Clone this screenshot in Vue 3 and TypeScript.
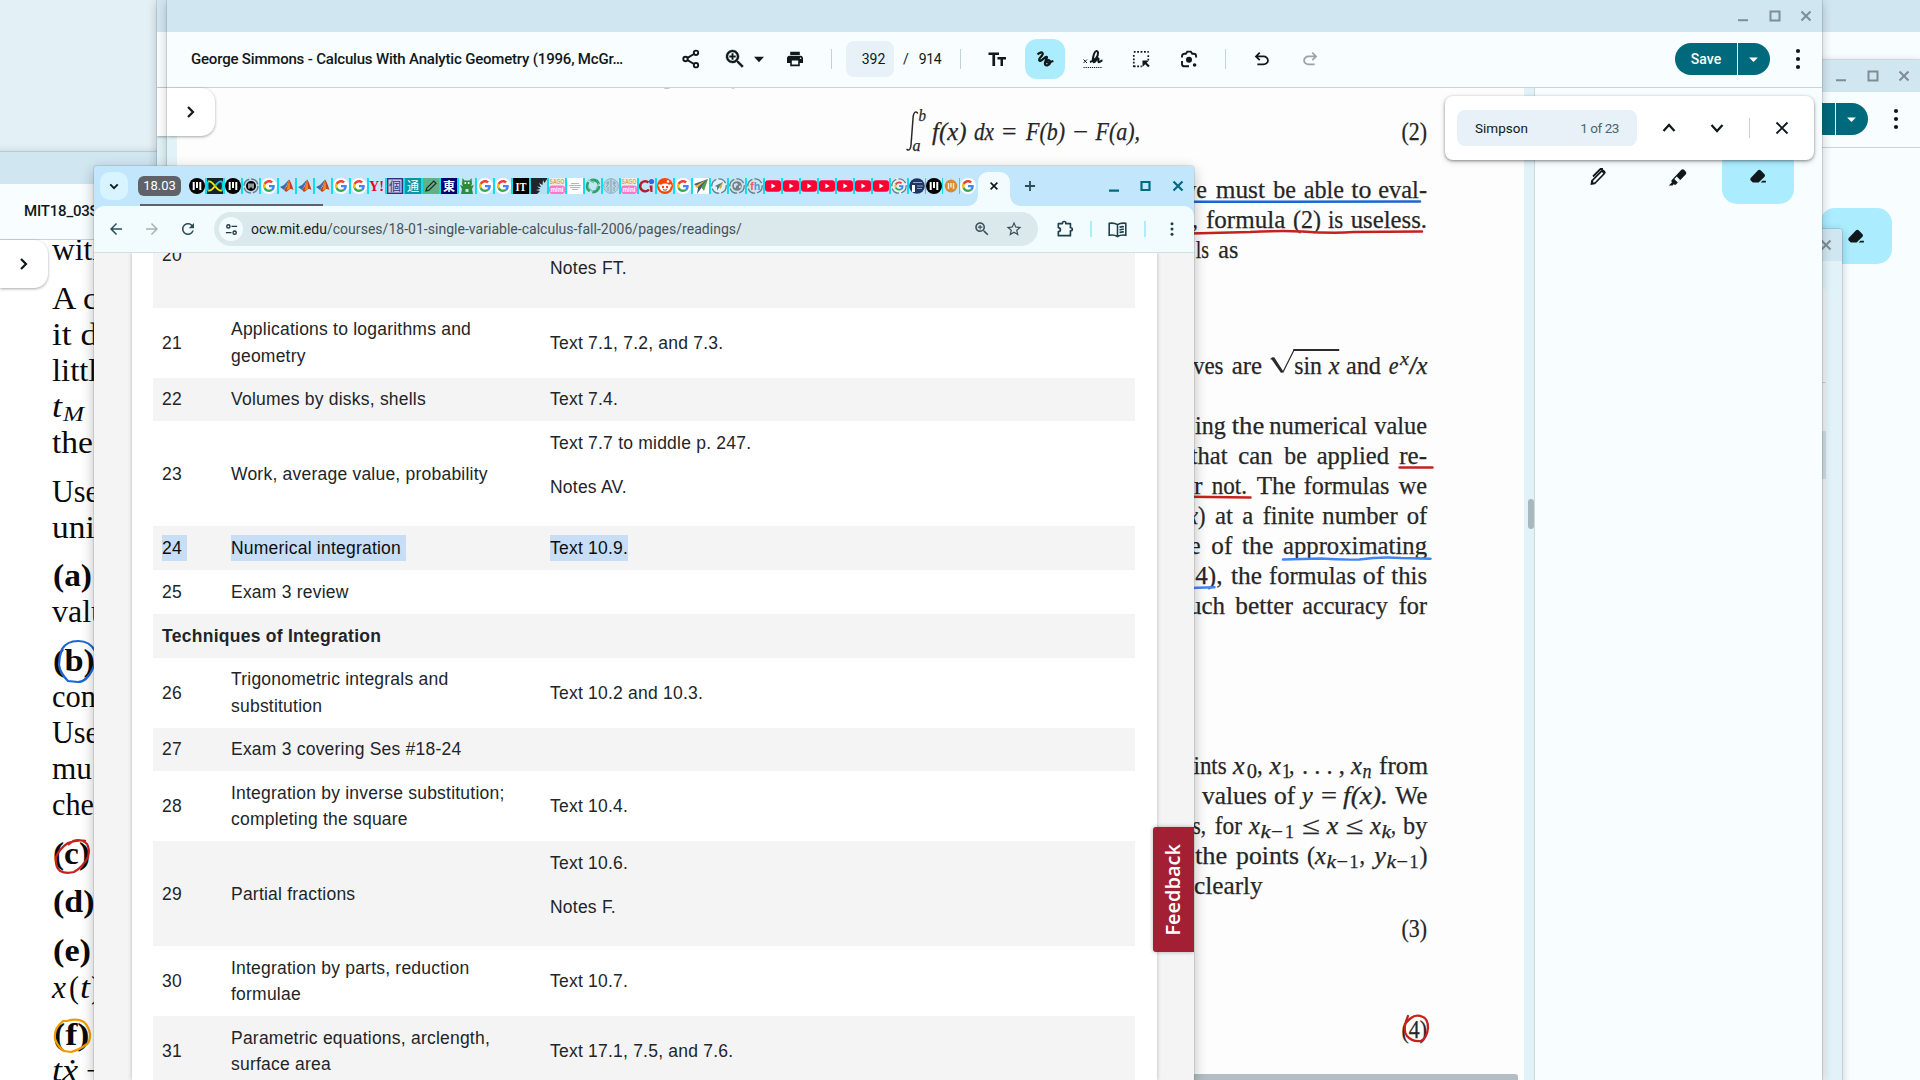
<script setup lang="ts">
interface Glyph {
  t: string
  x: number
  w?: number
  y: number
  s?: number
  i?: boolean
  b?: boolean
}

const icons = {
  zoomIn:
    'M15.5 14h-.79l-.28-.27C15.41 12.59 16 11.11 16 9.5 16 5.91 13.09 3 9.5 3S3 5.91 3 9.5 5.91 16 9.5 16c1.61 0 3.09-.59 4.23-1.57l.27.28v.79l5 4.99L20.49 19l-4.99-5zm-6 0C7.01 14 5 11.99 5 9.5S7.01 5 9.5 5 14 7.01 14 9.5 11.99 14 9.5 14zM12.5 10.25h-2.25v2.25h-1.5v-2.25H6.5v-1.5h2.25V6.5h1.5v2.25h2.25z',
  print:
    'M19 8H5c-1.66 0-3 1.34-3 3v6h4v4h12v-4h4v-6c0-1.66-1.34-3-3-3zm-3 11H8v-5h8v5zm3-7c-.55 0-1-.45-1-1s.45-1 1-1 1 .45 1 1-.45 1-1 1zm-1-9H6v4h12V3z',
  undo: 'M7 19v-2h7.1q1.575 0 2.738-1T18 13.5T16.838 11T14.1 10H7.8l2.6 2.6L9 14L4 9l5-5l1.4 1.4L7.8 8h6.3q2.425 0 4.163 1.575T20 13.5t-1.737 3.925T14.1 19z',
  star: 'M22 9.24l-7.19-.62L12 2 9.19 8.63 2 9.24l5.46 4.73L5.82 21 12 17.27 18.18 21l-1.63-7.03L22 9.24zM12 15.4l-3.76 2.27 1-4.28-3.32-2.88 4.38-.38L12 6.1l1.71 4.04 4.38.38-3.32 2.88 1 4.28L12 15.4z',
  back: 'M20 11H7.83l5.59-5.59L12 4l-8 8 8 8 1.41-1.41L7.83 13H20v-2z',
  reload:
    'M17.65 6.35C16.2 4.9 14.21 4 12 4c-4.42 0-7.99 3.58-7.99 8s3.57 8 7.99 8c3.73 0 6.84-2.55 7.73-6h-2.08c-.82 2.33-3.04 4-5.65 4-3.31 0-6-2.69-6-6s2.69-6 6-6c1.66 0 3.14.69 4.22 1.78L13 11h7V4l-2.35 2.35z',
  eraser: 'M5.2 19.2 2.6 16.6q-.9-.9-.9-2t.9-2L11.8 3q.9-.9 2-.9t2 .9l4.6 4.6q.9.9.9 2t-.9 2l-7.600 7.600zM15.500 19.200l2.500-2.500h4.500v2.500z',
}

const favicons: string[] = [
  'm', 'inf', 'm', 'mring', 'g', 'ml', 'ml', 'ml', 'g', 'g', 'y', 'ko', 'tsu', 'pen', 'higashi', 'frog',
  'g', 'g', 'it', 'burst', 'sago', 'lines', 'swirl', 'brain', 'sago', 'q', 'reddit', 'g', 'plane', 'planer',
  'globe', 'fh', 'yt', 'yt', 'yt', 'yt', 'yt', 'yt', 'yt', 'gring', 'navy', 'm', 'mo', 'g',
]

interface Row {
  n: string
  topic: string[]
  read: string[]
  selected?: boolean
  heading?: boolean
}
const rows: Row[] = [
  { n: '20', topic: [''], read: ['Text 6.4.', 'Notes FT.'] },
  { n: '21', topic: ['Applications to logarithms and', 'geometry'], read: ['Text 7.1, 7.2, and 7.3.'] },
  { n: '22', topic: ['Volumes by disks, shells'], read: ['Text 7.4.'] },
  { n: '23', topic: ['Work, average value, probability'], read: ['Text 7.7 to middle p. 247.', 'Notes AV.'] },
  { n: '24', topic: ['Numerical integration'], read: ['Text 10.9.'], selected: true },
  { n: '25', topic: ['Exam 3 review'], read: [] },
  { n: 'Techniques of Integration', topic: [], read: [], heading: true },
  { n: '26', topic: ['Trigonometric integrals and', 'substitution'], read: ['Text 10.2 and 10.3.'] },
  { n: '27', topic: ['Exam 3 covering Ses #18-24'], read: [] },
  { n: '28', topic: ['Integration by inverse substitution;', 'completing the square'], read: ['Text 10.4.'] },
  { n: '29', topic: ['Partial fractions'], read: ['Text 10.6.', 'Notes F.'] },
  { n: '30', topic: ['Integration by parts, reduction', 'formulae'], read: ['Text 10.7.'] },
  { n: '31', topic: ['Parametric equations, arclength,', 'surface area'], read: ['Text 17.1, 7.5, and 7.6.'] },
]

// Each word of the scanned textbook page keeps its typeset start and width.
function line(y: number, words: [string, number, number][]): Glyph[] {
  return words.map(([t, x, e]) => ({ t, x, w: e - x, y }))
}
const g = (t: string, x: number, e: number, y: number, i = true, s = 25): Glyph => ({ t, x, w: e - x, y, i, s })

const book: Glyph[] = [
  g('p', 664, 675, 83, false, 22), g('g', 728, 739, 83, false, 22),
  g('b', 918.500, 926, 121, true, 17), g('a', 912.500, 920.500, 151, true, 17),
  g('f(x)', 932, 966.500, 139.500), g('dx', 974, 994, 139.500), g('=', 1002, 1016.500, 139.500, false),
  g('F(b)', 1026, 1065, 139.500), g('−', 1073, 1088, 139.500, false), g('F(a),', 1095.500, 1140, 139.500),
  ...line(139.5, [['(2)', 1401.5, 1427]]),
  ...line(197.5, [['we', 1179, 1207], ['must', 1215.7, 1265], ['be', 1273.3, 1296], ['able', 1303.7, 1344], ['to', 1351.3, 1371.5], ['eval-', 1378.3, 1427]]),
  ...line(228, [[',', 1192, 1198], ['formula', 1206, 1285.3], ['(2)', 1293, 1321], ['is', 1328, 1343.3], ['useless.', 1350.7, 1427]]),
  ...line(258, [['ls', 1195.7, 1209], ['as', 1218.3, 1238.3]]),
  ...line(373.5, [['ves', 1193, 1223.5], ['are', 1231.7, 1262], ['sin', 1294.3, 1322], ['and', 1346, 1381]]),
  g('x', 1328.700, 1339.500, 373.500), g('e', 1388.700, 1398.500, 373.500), g('x', 1400, 1409, 364.500, true, 19),
  g('/', 1408.500, 1418, 373.500, false), g('x', 1416.500, 1427.500, 373.500),
  ...line(433.5, [['ing', 1195, 1225.7], ['the', 1231.7, 1264.3], ['numerical', 1269.3, 1367.3], ['value', 1374.3, 1427]]),
  ...line(463.7, [['that', 1190.7, 1227.5], ['can', 1238.3, 1272.7], ['be', 1284.3, 1306.7], ['applied', 1316.7, 1389], ['re-', 1399.3, 1427]]),
  ...line(493.8, [['r', 1194, 1202.5], ['not.', 1211.7, 1247], ['The', 1256.7, 1295.7], ['formulas', 1303.7, 1389.3], ['we', 1398.7, 1427]]),
  g('x', 1188, 1198, 524), ...line(524, [[')', 1198, 1205.5], ['at', 1215, 1233], ['a', 1242.3, 1253.3], ['finite', 1262.7, 1314], ['number', 1322.3, 1397.7], ['of', 1406.7, 1427.3]]),
  ...line(554, [['e', 1190.5, 1200.5], ['of', 1211.3, 1232.3], ['the', 1242, 1273.3], ['approximating', 1283, 1427]]),
  ...line(584, [['4),', 1195.3, 1222.5], ['the', 1231, 1262], ['formulas', 1269, 1356], ['of', 1362.7, 1384.3], ['this', 1391.3, 1427]]),
  ...line(614, [['uch', 1189, 1225], ['better', 1235.3, 1293], ['accuracy', 1302.3, 1387.7], ['for', 1398.7, 1427]]),
  ...line(774, [['ints', 1193.5, 1226.7], [',', 1257, 1262.7], [',', 1289, 1294.5], ['. . . ,', 1302, 1345], ['from', 1379, 1428]]),
  g('x', 1233, 1244.700, 774), g('0', 1246.700, 1257, 777.500, false, 20), g('x', 1269.500, 1281, 774), g('1', 1282, 1291, 777.500, false, 20),
  g('x', 1351, 1362, 774), g('n', 1362.500, 1371.500, 777.500, true, 20),
  ...line(804.3, [['values', 1202, 1267], ['of', 1274, 1295.3], ['=', 1321, 1337], ['We', 1395.3, 1427.3]]),
  g('y', 1301.700, 1312.700, 804.300), g('f(x).', 1343, 1388, 804.300),
  ...line(834.3, [['s,', 1192.5, 1206], ['for', 1214.7, 1242], ['≤', 1302, 1320], ['≤', 1345.5, 1363.5], [',', 1391, 1396], ['by', 1403, 1427.3]]),
  g('x', 1249, 1260, 834.300), g('k', 1260.500, 1270.500, 838, true, 19), g('−', 1271, 1283, 838, false, 19), g('1', 1285, 1294, 838, false, 19),
  g('x', 1326.700, 1338.300, 834.300), g('x', 1370, 1381, 834.300), g('k', 1381.500, 1391, 838, true, 19),
  ...line(864.3, [['the', 1195, 1227.3], ['points', 1236, 1299], ['(', 1307, 1315], [',', 1359.5, 1365], [')', 1419.5, 1427.5]]),
  g('x', 1315, 1326, 864.300), g('k', 1326.500, 1336, 868, true, 19), g('−', 1336.500, 1348, 868, false, 19), g('1', 1349.500, 1358.500, 868, false, 19),
  g('y', 1374.300, 1386, 864.300), g('k', 1386.500, 1396, 868, true, 19), g('−', 1396.500, 1408, 868, false, 19), g('1', 1409.500, 1418.500, 868, false, 19),
  ...line(894.3, [['clearly', 1194, 1262.7]]),
  ...line(937.3, [['(3)', 1401.5, 1427]]),
  ...line(1037.5, [['(4)', 1401.5, 1427]]),
]

const notes: Glyph[] = [
  { t: 'with', x: 52, y: 259.5, w: 56 }, { t: 'A c', x: 52, y: 308.5, w: 46 }, { t: 'it d', x: 52, y: 344.5, w: 46 },
  { t: 'little', x: 52, y: 380.5, w: 60 }, { t: 't', x: 52, y: 417, i: true, w: 10 }, { t: 'M', x: 63, y: 421, s: 21, i: true, w: 21 },
  { t: 'the', x: 52, y: 452.5, w: 41 }, { t: 'Use', x: 52, y: 501.5, w: 47 }, { t: 'unit', x: 52, y: 537.5, w: 52 },
  { t: '(a)', x: 53, y: 585.5, w: 39, b: true }, { t: 'valu', x: 52, y: 622, w: 55 },
  { t: '(b)', x: 53, y: 670.5, w: 42, b: true }, { t: 'con', x: 52, y: 707, w: 44 }, { t: 'Use', x: 52, y: 743, w: 47 },
  { t: 'mu', x: 52, y: 779, w: 40 }, { t: 'che', x: 52, y: 815, w: 42 },
  { t: '(c)', x: 53, y: 863.5, w: 37, b: true }, { t: '(d)', x: 53, y: 912, w: 41.5, b: true },
  { t: '(e)', x: 53, y: 961, w: 38, b: true }, { t: 'x', x: 52, y: 997.5, w: 14, i: true }, { t: '(', x: 69, y: 997.5, w: 10 },
  { t: 't', x: 80, y: 997.5, w: 10, i: true }, { t: ')', x: 91, y: 997.5, w: 10 },
  { t: '(f)', x: 53, y: 1045, w: 36.500, b: true }, { t: 'tẋ', x: 52, y: 1081, w: 26, i: true }, { t: '−', x: 86, y: 1081 },
]
</script>

<template>
  <div class="desktop">
    <!-- rearmost window, seen along the right edge -->
    <section class="win rear"><div class="bar"></div></section>

    <!-- second PDF viewer on the right -->
    <section class="win right-pdf">
      <div class="bar">
        <svg class="wb" viewBox="0 0 88 24"><path d="M4 16.200h10" /><path d="M36.500 7.500h9v9h-9z" /><path d="M67.500 7.500l9 9m0-9l-9 9" /></svg>
      </div>
      <div class="tools">
        <div class="save"><span>Save</span><i><svg viewBox="0 0 24 24"><path d="M6.500 9.500l5.500 5.500 5.500-5.500z" fill="#fff" /></svg></i></div>
        <svg class="ic dots" viewBox="0 0 24 24"><circle cx="12" cy="4" r="2.100" /><circle cx="12" cy="12" r="2.100" /><circle cx="12" cy="20" r="2.100" /></svg>
      </div>
      <div class="side-tools">
        <div class="tile on"><svg class="ic" viewBox="0 0 24 24"><g transform="translate(3 4.200) scale(.75)"><path :d="icons.eraser" /></g></svg></div>
      </div>
    </section>

    <!-- sliver window -->
    <section class="win sliver">
      <div class="bar"><svg viewBox="0 0 24 24"><path d="M7.500 7.500l9 9m0-9l-9 9" /></svg></div>
      <div class="sliver-body"><div class="sliver-pane"><b></b></div></div>
    </section>

    <!-- left notes window -->
    <section class="win notes">
      <div class="bar"></div>
      <div class="tools"><span class="title">MIT18_03S</span></div>
      <div class="doc">
        <svg class="page" width="300" height="840" viewBox="0 240 300 840">
          <text
            v-for="(t, k) in notes" :key="k" :x="t.x" :y="t.y" :font-size="t.s ?? 31" :textLength="t.w"
            lengthAdjust="spacingAndGlyphs" :font-style="t.i ? 'italic' : 'normal'" :font-weight="t.b ? 700 : 400"
          >{{ t.t }}</text>
          <g fill="none" stroke-width="2.200" stroke-linejoin="round">
            <path stroke="#1967d2" d="M62 649q5-8 16-8 12 0 17 10 2 9-2 17-6 14-15 14l-10-1q-8-8-9-16 0-8 3-16z" />
            <path stroke="#c5221f" d="M86 841q-8-2-18 2-9 6-12 14-1 10 4 14 6 3 14 1 9-5 14-15 2-8-1-13-6-6-14-3l-5 4" />
            <path stroke="#f29900" d="M67 1021q10-3 17 1 5 5 6 12 0 8-3 10-8 6-16 8l-7-1q-6-4-9-12-1-8 4-14l4-4z" />
          </g>
        </svg>
        <div class="expander"><svg class="ic" viewBox="0 0 24 24"><path d="M9 7l5 5-5 5" fill="none" stroke="#10181b" stroke-width="2.200" /></svg></div>
      </div>
    </section>

    <!-- PDF window directly behind the front one -->
    <section class="win behind-pdf">
      <div class="bar"></div>
      <div class="tools"></div>
      <div class="doc tinted"><div class="expander"></div></div>
    </section>

    <!-- main PDF viewer -->
    <section class="win pdf">
      <div class="bar">
        <svg class="wb" viewBox="0 0 88 24"><path d="M4 16.200h10" /><path d="M36.500 7.500h9v9h-9z" /><path d="M67.500 7.500l9 9m0-9l-9 9" /></svg>
      </div>
      <div class="tools">
        <span class="title main">George Simmons - Calculus With Analytic Geometry (1996, McGr…</span>
        <svg class="ic share" viewBox="0 0 24 24"><g fill="none" stroke="#10181b" stroke-width="1.900"><circle cx="6.500" cy="12" r="2.200" /><circle cx="17" cy="5.800" r="2.200" /><circle cx="17" cy="18.200" r="2.200" /><path d="M8.500 10.900l6.500-3.900M8.500 13.100l6.500 3.900" /></g></svg>
        <svg class="ic zoom" viewBox="0 0 24 24"><path :d="icons.zoomIn" stroke="#10181b" stroke-width=".4" /></svg>
        <svg class="ic caret" viewBox="0 0 24 24"><path d="M7 9.800l5 5.400 5-5.400z" /></svg>
        <svg class="ic printer" viewBox="0 0 24 24"><g transform="translate(2.400 2.400) scale(.8)"><path :d="icons.print" /></g></svg>
        <i class="vr a"></i>
        <span class="pageno">392</span><span class="slash">/</span><span class="total">914</span>
        <i class="vr b"></i>
        <svg class="ic tt" viewBox="0 0 24 24"><path d="M3.500 5.500h10.500v2.600h-3.900v10.900H7.400V8.100H3.500zM12.500 10h8.500v2.400h-3v6.600h-2.500v-6.600h-3z" /></svg>
        <div class="ink"><svg class="ic" viewBox="0 0 24 24"><path d="M4.500 7.500c2-1.800 4.600-2.800 5.200-1.200.8 2.300-4.600 5-3.400 7.200 1.100 1.900 5.300-3.200 7-3.600 2.200-.3-1.800 4.300-1.400 7 .4 2.400 4.600 2 5.200-1.100.5-2.300-1.500-3.300-3-2.400-1.200.8-.6 2.400 1.200 2.200 1.800-.1 3.200-.7 5-1.700" fill="none" stroke="#10181b" stroke-width="2.200" stroke-linejoin="round" /></svg></div>
        <svg class="ic sig" viewBox="0 0 24 24"><g fill="none" stroke="#10181b"><path stroke-width="2" d="M9 15c5-1.500 8.500-5.500 8-9.500-.5-2.500-3-1.500-4 1.500-1.200 3.500-1.400 7.500-.3 8.200 1.500.8 2.600-3.700 4.300-4 1.500 0-.6 3.800.8 4 1.300.1 1.800-1.600 3.700-1.700" /><path stroke-width="1" d="M2.500 12.500l3.500 3.500m0-3.500l-3.500 3.500" /><path stroke-width="1.200" stroke-dasharray="1.200 .9" d="M2.500 20.500h19" /></g></svg>
        <svg class="ic sel" viewBox="0 0 24 24"><g fill="none" stroke="#10181b" stroke-width="1.700"><path stroke-dasharray="1.800 1.600" d="M4.800 4.900h15M4.800 8v12M4.800 19.400h8M19.300 8.300v5" /></g><path d="M13.500 13.500h6.500l-2.300 2.300 3 3-1.500 1.500-3-3-2.700 2.700z" /></svg>
        <svg class="ic lens" viewBox="0 0 24 24"><g fill="none" stroke="#10181b" stroke-width="1.900"><path d="M5 10.500V9.200a2.400 2.400 0 0 1 2.400-2.400h1.400l1.500-2.200h3.500l1.500 2.200h1.400a2.400 2.400 0 0 1 2.400 2.400v1.300M5 14v2.900a2.400 2.400 0 0 0 2.400 2.400H12" /></g><circle cx="12" cy="12.800" r="3" /><circle cx="17.600" cy="18" r="1.800" /></svg>
        <i class="vr c"></i>
        <svg class="ic undo" viewBox="0 0 24 24"><g transform="translate(1.200 1.500) scale(.88)"><path :d="icons.undo" /></g></svg>
        <svg class="ic redo" viewBox="0 0 24 24"><g transform="translate(22.800 1.500) scale(-.88 .88)"><path :d="icons.undo" fill="#9aa3a6" /></g></svg>
        <div class="save"><span>Save</span><i><svg viewBox="0 0 24 24"><path d="M6.500 9.500l5.500 5.500 5.500-5.500z" fill="#fff" /></svg></i></div>
        <svg class="ic dots" viewBox="0 0 24 24"><circle cx="12" cy="4" r="2.100" /><circle cx="12" cy="12" r="2.100" /><circle cx="12" cy="20" r="2.100" /></svg>
      </div>
      <div class="pdf-body">
        <i class="gutter"></i>
        <div class="sheet">
          <svg class="scan" width="1347" height="992" viewBox="177 88 1347 992">
            <text
              v-for="(t, k) in book" :key="k" :x="t.x" :y="t.y" :font-size="t.s ?? 25" :textLength="t.w"
              lengthAdjust="spacingAndGlyphs" :font-style="t.i ? 'italic' : 'normal'"
            >{{ t.t }}</text>
            <g fill="none" stroke="#2a2a2a" stroke-linecap="round">
              <path stroke-width="1.500" d="M917.500 113q-3-3-4.300 3l-2.200 29q-.6 6.500-4 4.500" />
              <path stroke-width="1.200" d="M1271 359l3-1 9 14 11-22" /><path stroke-width="2.400" d="M1272.500 358.500l9 13" /><path stroke-width="1.900" d="M1294 350h44.500" />
            </g>
            <g fill="none" stroke-width="2.500" stroke-linecap="round">
              <path stroke="#1967d2" d="M1190 201.800h90l140-.4" />
              <path stroke="#c5221f" d="M1190 233.500l60-1.500q30-1.500 52-.5 30 2 52 .6l68-.6M1399.500 467.400h33M1190 496.700l60.500.9" />
              <path stroke="#4285f4" d="M1283 559.500l38-1q20 1.500 38 1 22-3 42-1.500l29.500.8M1190 588l24.500-.7" />
              <path stroke="#c5221f" stroke-width="2.300" d="M1408 1016q-6 14-1 20 5 6 14 5 6-3 7-13 0-9-5-11-7-3-12 1-4 3-6 6" />
            </g>
          </svg>
          <div class="hscroll"></div>
          <div class="expander"><svg class="ic" viewBox="0 0 24 24"><path d="M9 7l5 5-5 5" fill="none" stroke="#10181b" stroke-width="2.200" /></svg></div>
        </div>
        <div class="vtrack"><i></i></div>
        <aside class="side">
          <div class="side-tools">
            <div class="tile"><svg class="ic" viewBox="0 0 24 24"><g transform="translate(0 1)"><path d="M4.500 20l.6-4.600L15.200 5.300q1.500-1.500 3 0l.8.8q1.500 1.500 0 3L9 19.200zM7 17.500l1.800-.3 8.500-8.700-1.400-1.400-8.500 8.500z" fill-rule="evenodd" /><path d="M7 11.500l7.500-7.500h2.500" fill="none" stroke="#10181b" stroke-width="1.800" /></g></svg></div>
            <div class="tile"><svg class="ic" viewBox="0 0 24 24"><g transform="translate(-1.200 .4) scale(1.060)"><path d="M3.800 19.800l3-3-.5-.6q-.5-.7.100-1.300l9-9.600q1.500-1.500 3 0l1.300 1.300q1.500 1.500 0 3L10.500 19q-.6.600-1.300.1l-.6-.5-1.200 1.200zM9 13.800l3.200 3.200 2.300-2.400-3.200-3.200z" fill-rule="evenodd" /></g></svg></div>
            <div class="tile on"><svg class="ic" viewBox="0 0 24 24"><g transform="translate(3 4.200) scale(.75)"><path :d="icons.eraser" /></g></svg></div>
          </div>
        </aside>
      </div>
      <div class="find">
        <div class="find-in"><span>Simpson</span><em>1 of 23</em></div>
        <svg class="ic up" viewBox="0 0 24 24"><path d="M6.500 15l5.500-6 5.500 6" /></svg>
        <svg class="ic down" viewBox="0 0 24 24"><path d="M6.500 9l5.500 6 5.500-6" /></svg>
        <i class="vr"></i>
        <svg class="ic close" viewBox="0 0 24 24"><path d="M6.500 6.500l11 11m0-11l-11 11" /></svg>
      </div>
    </section>

    <!-- browser window -->
    <section class="win chrome">
      <div class="tabs">
        <div class="tabsearch"><svg viewBox="0 0 24 24"><path d="M7.500 10l4.500 4.500 4.500-4.500" fill="none" stroke="#10181b" stroke-width="2.200" /></svg></div>
        <div class="group">18.03</div>
        <div class="favs">
          <span v-for="(f, k) in favicons" :key="k" class="fav" :class="{ tight: k > 39 }">
            <svg viewBox="0 0 16 16">
              <g v-if="f === 'm'"><circle cx="8" cy="8" r="8" /><path d="M4.700 4v8M8 4v6M11.300 4v8" stroke="#fff" stroke-width="2" /></g>
              <g v-else-if="f === 'inf'"><rect width="16" height="16" fill="#10242a" /><path d="M1 3.500q3-1 7 4.500t7 4.500M1 12.500q3 1 7-4.500" fill="none" stroke="#f3e600" stroke-width="1.900" /><path d="M8 8q4-5.500 7-4.500M1 3.500q-1 4 0 9M15 3.500q1.500 4 0 9" fill="none" stroke="#19c8d8" stroke-width="1.900" /></g>
              <g v-else-if="f === 'mring'"><circle cx="8" cy="8" r="7" fill="#c6dbe3" stroke="#5f7f8d" stroke-width="1.400" stroke-dasharray="9 2" /><circle cx="8" cy="8" r="5" /><path d="M6 5.500v5M8 5.500v4M10 5.500v5" stroke="#fff" stroke-width="1.200" /></g>
              <g v-else-if="f === 'g' || f === 'gring'">
                <circle cx="8" cy="8" r="8" fill="#fff" /><circle v-if="f === 'gring'" cx="8" cy="8" r="7.200" fill="#e5f0f4" stroke="#5f7f8d" stroke-width="1.300" stroke-dasharray="9 2" />
                <g :transform="f === 'g' ? 'translate(2 2) scale(.25)' : 'translate(3.500 3.500) scale(.19)'">
                  <path fill="#EA4335" d="M24 9.500c3.540 0 6.710 1.220 9.210 3.600l6.850-6.850C35.900 2.380 30.470 0 24 0 14.620 0 6.510 5.380 2.560 13.220l7.980 6.190C12.430 13.720 17.740 9.500 24 9.500z" />
                  <path fill="#4285F4" d="M46.980 24.550c0-1.570-.15-3.090-.38-4.550H24v9.020h12.940c-.58 2.960-2.260 5.480-4.780 7.180l7.730 6c4.510-4.180 7.090-10.360 7.090-17.650z" />
                  <path fill="#FBBC05" d="M10.530 28.590c-.48-1.450-.76-2.990-.76-4.590s.27-3.140.76-4.590l-7.980-6.190C.92 16.460 0 20.120 0 24c0 3.880.92 7.540 2.560 10.780l7.970-6.190z" />
                  <path fill="#34A853" d="M24 48c6.480 0 11.930-2.130 15.890-5.810l-7.730-6c-2.150 1.450-4.920 2.300-8.160 2.300-6.260 0-11.570-4.220-13.470-9.910l-7.980 6.190C6.510 42.620 14.620 48 24 48z" />
                </g>
              </g>
              <g v-else-if="f === 'ml'"><path d="M1 9l4-2 5-5.500Q8 8 5 12z" fill="#3a6ea5" /><path d="M5 12l3-4 2-6.500q1.500 1 4.500 10.500-2-1.500-3.500-1-2 2-4 3z" fill="#c4401f" /><path d="M7.500 12.500q1.500-6 2.500-10 1 3 1 8.500z" fill="#f08a24" /></g>
              <g v-else-if="f === 'y'"><text x="0" y="13" font-size="14" font-weight="700" fill="#e8002d" font-family="Liberation Serif" textLength="15" lengthAdjust="spacingAndGlyphs">Y!</text></g>
              <g v-else-if="f === 'ko'"><rect x=".7" y=".7" width="14.600" height="14.600" fill="#c9c6e6" stroke="#35307c" stroke-width="1.400" /><text class="cjk" x="2" y="12.500" font-size="12" fill="#35307c">個</text></g>
              <g v-else-if="f === 'tsu'"><rect width="16" height="16" fill="#0a97a2" /><text class="cjk" x="2" y="12.500" font-size="12" fill="#fff">通</text></g>
              <g v-else-if="f === 'pen'"><rect width="16" height="16" fill="#5fb383" /><path d="M3 13l.8-3 7-7 2.200 2.200-7 7z" fill="none" stroke="#1d2b24" stroke-width="1.200" /></g>
              <g v-else-if="f === 'higashi'"><rect width="16" height="16" fill="#000070" /><text class="cjk" x="2" y="12.700" font-size="12" font-weight="700" fill="#fff">東</text></g>
              <g v-else-if="f === 'frog'"><path d="M3.500 0l2 2.500h5l2-2.500.5 6-1 2 3-1-2 4 1 5H2l1-5-2-4 3 1-1-2z" fill="#2f8a3a" /><circle cx="6.300" cy="5" r="1" fill="#fff" /><circle cx="9.700" cy="5" r="1" fill="#fff" /><path d="M6.500 11h3v3h-3z" fill="#bfe3ee" /></g>
              <g v-else-if="f === 'it'"><rect width="16" height="16" /><text x="2.500" y="12.500" font-size="13" font-weight="700" fill="#fff" font-family="Liberation Serif" textLength="11" lengthAdjust="spacingAndGlyphs">IT</text></g>
              <g v-else-if="f === 'burst'"><rect width="16" height="16" fill="#20262a" /><path d="M16 1l-2.500 4L12 2l-.5 5L8 5l2 4-4-.5 3.500 2.500L5 12l4 1-3 3h10z" fill="#b5dff2" /></g>
              <g v-else-if="f === 'sago'"><rect width="16" height="16" fill="#e6f2ee" /><rect y="7.500" width="16" height="8.500" rx="3" fill="#ff77c8" /><text x=".5" y="6" font-size="7" font-weight="700" fill="#e0a24e" font-family="Liberation Sans" textLength="15" lengthAdjust="spacingAndGlyphs">SAGO</text><text x="1.500" y="14.200" font-size="7" font-weight="700" fill="#fff" font-family="Liberation Sans" textLength="13" lengthAdjust="spacingAndGlyphs">mini</text></g>
              <g v-else-if="f === 'lines'"><rect width="16" height="16" fill="#fff" /><path d="M4 5.500h8M2 7.500h12M3 9.500h10M5 11.500h6" stroke="#b5b5b5" stroke-width="1" /></g>
              <g v-else-if="f === 'swirl'"><circle cx="8" cy="8" r="6" fill="none" stroke="#2fa36b" stroke-width="2.800" stroke-dasharray="10 2.500" /><path d="M3 2l6 3M14 5l-3 6M8 14l-5-5" stroke="#7cc9a2" stroke-width="1.200" /></g>
              <g v-else-if="f === 'brain'"><circle cx="8" cy="8" r="7.400" fill="#b9d3df" stroke="#86aabb" stroke-width=".8" /><path d="M8 1v14M5 3v4l-2 2M5 9v4M11 3v4l2 2M11 9v4M3 5h3M10 5h3" fill="none" stroke="#7c9fb2" stroke-width=".9" /></g>
              <g v-else-if="f === 'q'"><path d="M9.500 4.500a5 5 0 1 0 .5 7" fill="none" stroke="#b3202c" stroke-width="2.600" /><circle cx="12.500" cy="3.500" r="2.600" fill="#2d6be0" /><path d="M10.500 7.500h3v6.500h-2z" fill="#b3202c" /></g>
              <g v-else-if="f === 'reddit'"><circle cx="8" cy="8" r="8" fill="#ff4500" /><ellipse cx="8" cy="9.500" rx="5.500" ry="4" fill="#fff" /><circle cx="11" cy="3.500" r="1.300" fill="#fff" /><circle cx="2.700" cy="7.500" r="1.300" fill="#fff" /><circle cx="13.300" cy="7.500" r="1.300" fill="#fff" /><circle cx="6" cy="9" r="1.200" fill="#ff4500" /><circle cx="10" cy="9" r="1.200" fill="#ff4500" /><path d="M5.800 11.500q2.200 1.500 4.400 0" fill="none" stroke="#333" stroke-width=".8" /></g>
              <g v-else-if="f === 'plane'"><rect width="16" height="16" fill="#fff" /><path d="M1 6L15 1 4 16l1-6z" fill="#3f5f7d" /><path d="M2 8l11-6-9 8z" fill="#e9b52f" /><path d="M8 9l7-8-4 12z" fill="#5b9b4f" /></g>
              <g v-else-if="f === 'planer'"><circle cx="8" cy="8" r="7.200" fill="#e5f0f4" stroke="#5f7f8d" stroke-width="1.300" stroke-dasharray="9 2" /><path d="M4 8l8-4-6 8.500V9z" fill="#4d7f86" /><path d="M8 9l4-5-2 7z" fill="#e0a52f" /></g>
              <g v-else-if="f === 'globe'"><circle cx="8" cy="8" r="7.200" fill="#d4e2e8" stroke="#5f7f8d" stroke-width="1.300" stroke-dasharray="9 2" /><circle cx="8" cy="8" r="4.800" fill="#74828b" /><path d="M5 6l3-1 1 2-2 1v2L5 9zM10 8l2-.5-.5 2.500H10z" fill="#d4e2e8" /></g>
              <g v-else-if="f === 'fh'"><circle cx="8" cy="8" r="7.200" fill="#d4e2e8" stroke="#5f7f8d" stroke-width="1.300" stroke-dasharray="9 2" /><text x="3.300" y="12" font-size="10.500" font-weight="700" font-family="Liberation Sans"><tspan fill="#ef5b4c">f</tspan><tspan fill="#37a3e0">h</tspan></text></g>
              <g v-else-if="f === 'yt'"><rect y="2.300" width="16" height="11.400" rx="3" fill="#ff0033" /><path d="M6.400 5.600v4.800L10.600 8z" fill="#fff" /></g>
              <g v-else-if="f === 'navy'"><circle cx="8" cy="8" r="7.800" fill="#1d3765" /><path d="M3 7h3v7H3z" fill="#fff" /><path d="M4 4.500h9M8 8h6M8 10.500h5" stroke="#8ea3c4" stroke-width="1.200" /></g>
              <g v-else-if="f === 'mo'"><ellipse cx="8" cy="8" rx="6.300" ry="6.500" fill="#d98a35" /><path d="M5.500 5v6M8 5v4.500M10.500 5v6" stroke="#f8e6cf" stroke-width="1.500" /></g>
            </svg>
          </span>
        </div>
        <div class="active-tab"><svg viewBox="0 0 24 24"><path d="M7.500 7.500l9 9m0-9l-9 9" /></svg></div>
        <svg class="plus" viewBox="0 0 24 24"><path d="M12 6.500v11M6.500 12h11" /></svg>
        <svg class="wb" viewBox="0 0 88 24"><path d="M7 16.700h10" /><path d="M39.500 8h8v8h-8z" /><path d="M71.500 7.500l9 9m0-9l-9 9" /></svg>
      </div>
      <div class="nav">
        <svg class="nb" viewBox="0 0 24 24"><path :d="icons.back" /></svg>
        <svg class="nb dim" viewBox="0 0 24 24"><g transform="translate(24) scale(-1 1)"><path :d="icons.back" /></g></svg>
        <svg class="nb" viewBox="0 0 24 24"><path :d="icons.reload" /></svg>
        <div class="omni">
          <span class="tune"><svg viewBox="0 0 24 24"><g fill="none" stroke="#1f3840" stroke-width="2.200"><circle cx="7" cy="7" r="2.600" /><path d="M12 7h9M3 17h9" /><circle cx="17" cy="17" r="2.600" /></g></svg></span>
          <span class="url"><b>ocw.mit.edu</b>/courses/18-01-single-variable-calculus-fall-2006/pages/readings/</span>
          <svg class="oi" viewBox="0 0 24 24"><path :d="icons.zoomIn" /></svg>
          <svg class="oi star" viewBox="0 0 24 24"><path :d="icons.star" /></svg>
        </div>
        <svg class="ext" viewBox="0 0 24 24"><path d="M4 5.500h5q-.3-2.500 2-2.500T13 5.500h5.500v5q2.300-.2 2.300 1.800t-2.300 2V20H4v-4.800q2.500-.2 2.500-2.400T4 10.300z" fill="none" stroke="#1f3f4a" stroke-width="2" stroke-linejoin="round" /></svg>
        <i class="nv one"></i>
        <svg class="reader" viewBox="0 0 24 24"><path d="M12 6.500Q8 4 2.500 5v13.500Q8 17.500 12 20q4-2.500 9.500-1.500V5Q16 4 12 6.500V20M14.300 9.500q2.500-1 5-.7M14.300 12.500q2.500-1 5-.7M14.300 15.500q2.500-1 5-.7" fill="none" stroke="#1f3f4a" stroke-width="1.800" /></svg>
        <i class="nv two"></i>
        <svg class="kebab" viewBox="0 0 24 24"><circle cx="12" cy="5" r="2" /><circle cx="12" cy="12" r="2" /><circle cx="12" cy="19" r="2" /></svg>
      </div>
      <div class="web">
        <div class="card">
          <div class="table">
            <div v-for="r in rows" :key="r.n" class="tr" :class="{ picked: r.selected, heading: r.heading }">
              <div class="td"><span>{{ r.n }}</span></div>
              <div v-if="!r.heading" class="td"><span v-for="t in r.topic" :key="t">{{ t }}</span></div>
              <div v-if="!r.heading" class="td" :class="{ multi: r.read.length > 1 }"><span v-for="t in r.read" :key="t">{{ t }}</span></div>
            </div>
          </div>
        </div>
        <div class="feedback"><span>Feedback</span></div>
      </div>
    </section>
  </div>
</template>

<style>
html,
body {
  margin: 0;
  overflow: hidden;
}
</style>

<style scoped>
.desktop {
  position: relative;
  width: 1920px;
  height: 1080px;
  overflow: hidden;
  background: #e3f0f5;
  font-family: Roboto, 'Liberation Sans', sans-serif;
  color: #10181b;
}
.win {
  position: absolute;
  background: #f8fdff;
  overflow: hidden;
  box-shadow: 0 0 0 1px rgba(60, 80, 90, 0.15), 0 2px 10px rgba(0, 0, 0, 0.22);
}
.bar {
  height: 32px;
  display: flex;
  justify-content: flex-end;
  background: #d0e6f1;
}
.bar svg {
  fill: none;
  stroke: #7f8d94;
  stroke-width: 2;
}
.wb {
  width: 88px;
  height: 24px;
  margin: 4px 0 0 0;
}
.rear { left: 1600px; top: 0; width: 330px; height: 1080px; }
.right-pdf { left: 1300px; top: 60px; width: 620px; height: 1030px; border-radius: 3px 0 0; }
.sliver { left: 1700px; top: 229px; width: 142px; height: 860px; border-radius: 3px; background: #e1f3f8; }
.sliver .bar svg { width: 24px; height: 24px; margin: 4px 4px 0 0; }
.sliver-pane {
  width: 126px;
  height: 808px;
  margin-top: 21px;
  border-radius: 0 14px 0 0;
  background: linear-gradient(#f1f3f7 100px, #ccd3d6 100px, #ccd3d6 101px, #f1f3f7 101px);
}
.sliver-pane b { display: block; width: 126px; height: 48px; background: #cfdde4; position: relative; top: 149px; }
.notes { left: -300px; top: 152px; width: 760px; height: 940px; }
.notes .tools { padding-left: 324px; }
.behind-pdf { left: 157px; top: 0; width: 1600px; height: 1090px; }
.pdf { left: 167px; top: 0; width: 1655px; height: 1080px; display: flex; flex-direction: column; }
.tools {
  box-sizing: border-box;
  height: 56px;
  display: flex;
  align-items: center;
  padding: 0 12px 1px 0;
  border-bottom: 1px solid #c3d6db;
  background: #f8fdff;
}
.ic { width: 24px; height: 24px; flex: none; display: block; fill: #10181b; }
.title { font-size: 15px; font-weight: 500; white-space: nowrap; letter-spacing: -0.190px; }
.title.main { margin-left: 24px; width: 434px; flex: none; }
.share { margin-left: 54px; }
.zoom { margin-left: 20px; }
.caret { margin-left: 0; }
.printer { margin-left: 12px; }
.vr { width: 1px; height: 20px; background: #c5d3d8; flex: none; }
.vr.a { margin: 0 14px 0 24px; }
.pageno {
  box-sizing: border-box;
  width: 48px;
  height: 36px;
  line-height: 36px;
  padding-left: 7px;
  text-align: center;
  border-radius: 8px;
  background: #e8f1f8;
  font-size: 14px;
  flex: none;
}
.slash { width: 24px; text-align: center; font-size: 14px; flex: none; }
.total { width: 24px; text-align: center; font-size: 14px; letter-spacing: -0.300px; flex: none; }
.vr.b { margin: 0 24px 0 18px; }
.ink {
  width: 40px;
  height: 40px;
  margin-left: 16px;
  display: flex;
  align-items: center;
  justify-content: center;
  background: #abecff;
  border-radius: 12px;
  flex: none;
}
.sig { margin-left: 16px; }
.sel { margin-left: 24px; }
.lens { margin-left: 24px; }
.vr.c { margin: 0 24px; }
.redo { margin-left: 24px; }
.save {
  display: flex;
  margin-left: auto;
  width: 95px;
  height: 32px;
  flex: none;
  border-radius: 16px;
  overflow: hidden;
  background: #006a7c;
  color: #fff;
  font-size: 14px;
  font-weight: 500;
  line-height: 32px;
}
.save span { width: 62px; text-align: center; }
.save i { display: flex; align-items: center; width: 32px; border-left: 1px solid #e8f8fb; }
.save i svg { width: 19px; height: 19px; margin-left: 6px; }
.dots { margin-left: 16px; }
.doc { position: relative; height: 850px; background: #fff; }
.doc.tinted { height: 992px; background: #e1f3f8; }
.notes .page { display: block; margin-left: 300px; }
.page text { font-family: 'Liberation Serif', serif; fill: #0a0a0a; }
.expander {
  position: absolute;
  left: 0;
  top: 0;
  width: 48px;
  height: 48px;
  display: flex;
  align-items: center;
  justify-content: center;
  background: #fff;
  border-radius: 0 14px 14px 0;
  box-shadow: 0 1px 3px rgba(0, 0, 0, 0.35);
}
.notes .expander { left: 300px; }
.pdf-body { flex: 1; display: flex; min-height: 0; }
.gutter { width: 10px; background: #e1f3f8; flex: none; }
.sheet { position: relative; width: 1347px; background: #fdfdfd; flex: none; }
.sheet .expander { left: -10px; }
.scan { display: block; }
.scan text { font-family: 'Liberation Serif', serif; fill: #262626; stroke: #262626; stroke-width: 0.25; }
.hscroll { position: absolute; left: 0; bottom: 0; width: 1341px; height: 6px; border-radius: 3px 3px 0 0; background: #b2bec3; }
.vtrack { width: 10px; background: #e1f3f8; border-right: 1px solid #ccd9de; flex: none; }
.vtrack i { display: block; width: 6px; height: 30px; margin: 411px 0 0 4px; border-radius: 3px; background: #a9b8be; }
.side { flex: 1; }
.side-tools { display: flex; gap: 8px; justify-content: flex-end; padding: 60px 28px 0 0; }
.tile { width: 72px; height: 56px; display: flex; align-items: center; justify-content: center; border-radius: 15px; }
.tile.on { background: #abecff; }
.find {
  position: absolute;
  left: 1278px;
  top: 96px;
  width: 369px;
  height: 64px;
  display: flex;
  align-items: center;
  background: #fff;
  border-radius: 8px;
  box-shadow: 0 1px 3px rgba(0, 0, 0, 0.4), 0 2px 6px rgba(0, 0, 0, 0.15);
}
.find .ic { fill: none; stroke: #10181b; stroke-width: 2.200; }
.find .close { stroke-width: 1.900; margin-left: 20px; }
.find-in {
  box-sizing: border-box;
  width: 180px;
  height: 36px;
  margin-left: 12px;
  padding: 0 18px;
  display: flex;
  justify-content: space-between;
  align-items: center;
  border-radius: 8px;
  background: #e8f1f8;
  font-size: 13.500px;
}
.find-in em { font-style: normal; color: #4a6572; letter-spacing: -0.450px; }
.find .up { margin-left: 20px; }
.find .down { margin: 0 20px 0 24px; }

.chrome {
  left: 94px;
  top: 166px;
  width: 1100px;
  height: 914px;
  border-radius: 3px 3px 0 0;
  background: #c2e7fd;
  box-shadow: 0 0 0 1px rgba(60, 90, 110, 0.15), 0 4px 14px rgba(0, 0, 0, 0.28);
}
.tabs { height: 40px; display: flex; align-items: center; }
.tabsearch {
  width: 28px;
  height: 28px;
  margin-left: 6px;
  border-radius: 10px;
  background: #d8f4ff;
  display: flex;
  align-items: center;
  justify-content: center;
}
.tabsearch svg { width: 20px; height: 20px; }
.group {
  width: 43px;
  height: 20px;
  margin-left: 10px;
  border-radius: 6px;
  background: #5f6368;
  color: #fff;
  font-size: 13px;
  line-height: 20px;
  text-align: center;
  flex: none;
}
.group::after {
  content: '';
  position: absolute;
  left: 46px;
  top: 38px;
  width: 183px;
  height: 2px;
  background: #5f6368;
}
.favs { display: flex; margin-left: 8px; width: 784px; flex: none; }
.fav { width: 18px; height: 16px; flex: none; box-sizing: border-box; border-right: 2px solid #12dcf2; }
.fav:last-child { border-right: 0; }
.fav.tight { width: 17px; border-right-width: 1px; }
.fav svg { display: block; width: 16px; height: 16px; }
.cjk { font-family: 'Noto Sans CJK JP', sans-serif; }
.active-tab {
  position: relative;
  width: 32px;
  height: 34px;
  margin: 6px 0 0 5px;
  border-radius: 10px 10px 0 0;
  background: #f2fcff;
  flex: none;
}
.active-tab::before,
.active-tab::after {
  content: '';
  position: absolute;
  bottom: 0;
  width: 10px;
  height: 10px;
}
.active-tab::before { left: -10px; background: radial-gradient(circle at 0 0, transparent 9.500px, #f2fcff 10px); }
.active-tab::after { right: -10px; background: radial-gradient(circle at 100% 0, transparent 9.500px, #f2fcff 10px); }
.active-tab svg { display: block; width: 18px; height: 18px; margin: 5px 7px; stroke: #10181b; stroke-width: 2.200; }
.plus { width: 22px; height: 22px; margin-left: 9px; stroke: #2c4d59; stroke-width: 2; }
.tabs .wb { width: 88px; margin: 0 0 0 61px; fill: none; stroke: #006a80; stroke-width: 2.200; }
.nav {
  box-sizing: border-box;
  height: 47px;
  display: flex;
  align-items: center;
  background: #f2fcff;
  border-radius: 10px 10px 0 0;
  border-bottom: 1px solid #cfe2e8;
}
.nb { width: 18px; height: 18px; margin-left: 13px; fill: #2c4d59; flex: none; }
.nb + .nb { margin-left: 18px; }
.nb.dim { fill: #a9b3b7; }
.omni {
  width: 824px;
  height: 34px;
  margin-left: 17px;
  border-radius: 17px;
  background: #dbe9ed;
  display: flex;
  align-items: center;
  flex: none;
}
.tune { width: 24px; height: 24px; margin-left: 5px; border-radius: 50%; background: #f2fcff; display: flex; align-items: center; justify-content: center; flex: none; }
.tune svg { width: 15px; height: 15px; }
.url { margin-left: 8px; width: 722px; font-size: 14px; color: #44525a; white-space: nowrap; letter-spacing: 0.025px; flex: none; }
.url b { font-weight: 400; color: #151d20; }
.oi { width: 18px; height: 18px; fill: #3b4f57; flex: none; }
.oi.star { margin-left: 14px; }
.ext { width: 20px; height: 20px; margin-left: 17px; flex: none; }
.nv { width: 2px; height: 16px; background: #abecff; flex: none; }
.nv.one { margin-left: 15px; }
.reader { width: 21px; height: 21px; margin-left: 15px; flex: none; }
.nv.two { margin-left: 16px; }
.kebab { width: 18px; height: 18px; margin-left: 17px; fill: #1f3f4a; flex: none; }
.web {
  height: 827px;
  box-sizing: border-box;
  overflow: hidden;
  background: #f4f4f4;
  padding: 0 37px 0 38px;
}
.card { height: 827px; overflow: hidden; background: #fff; box-shadow: 0 0 4px rgba(0, 0, 0, 0.25); padding: 0 22px 0 21px; }
.table {
  margin-top: -50.300px;
  font: 17.500px/26.250px 'Liberation Sans', Arial, sans-serif;
  letter-spacing: 0.220px;
  color: #212529;
}
.tr { display: grid; grid-template-columns: 69.250px 319px 1fr; align-items: center; }
.tr:nth-child(odd) { background: #f4f4f4; }
.tr.heading { grid-template-columns: 1fr; font-weight: 700; letter-spacing: 0.260px; }
.td { padding: 8.750px; display: flex; flex-direction: column; align-items: flex-start; white-space: nowrap; }
.td:first-child { padding-left: 9.100px; }
.td.multi span { margin-bottom: 17.500px; }
.tr.picked span { background: #c7def6; color: #0c0e10; }
.tr.picked .td:first-child span,
.tr.picked .td:nth-child(2) span { padding-right: 5px; }
.feedback {
  position: absolute;
  left: 1059px;
  top: 661px;
  width: 41px;
  height: 125px;
  display: flex;
  align-items: center;
  justify-content: center;
  background: #a31f34;
  border-radius: 3px 0 0 3px;
  box-shadow: 0 0 4px rgba(0, 0, 0, 0.3);
}
.feedback span {
  writing-mode: vertical-rl;
  transform: rotate(180deg);
  margin-right: 2px;
  color: #fff;
  font: 600 20px/24px 'Open Sans', 'Noto Sans', sans-serif;
}
</style>
